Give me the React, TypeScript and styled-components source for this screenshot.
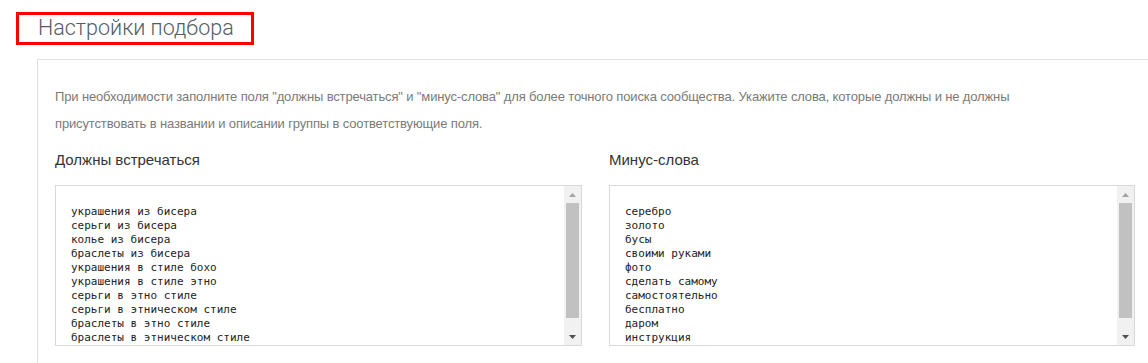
import React from 'react'
import styled, { createGlobalStyle } from 'styled-components'

const GlobalStyle = createGlobalStyle`
  html, body {
    margin: 0;
    padding: 0;
    overflow: hidden;
    background: #fff;
  }
`

const Page = styled.div`
  width: 1148px;
  height: 363px;
  overflow: hidden;
  padding: 12px 0 0 16px;
  box-sizing: border-box;
`

const TitleBox = styled.div`
  display: inline-block;
  box-sizing: border-box;
  width: 238px;
  height: 33px;
  border: 3px solid #f00;
  padding-left: 19px;
  font-family: Roboto, 'Liberation Sans', sans-serif;
  font-weight: 300;
  font-size: 21.5px;
  line-height: 25px;
  color: #555b63;
  white-space: nowrap;
`

const Panel = styled.section`
  box-sizing: border-box;
  width: 1117px;
  margin: 14px 0 0 21px;
  padding: 23px 17px 40px 17px;
  border: 1px solid #e0e0e0;
`

const Hint = styled.p`
  margin: 0;
  font-family: 'Liberation Sans', Arial, sans-serif;
  font-size: 13px;
  line-height: 27px;
  letter-spacing: -0.14px;
  color: #7a7a7a;
`

const Columns = styled.div`
  display: grid;
  grid-template-columns: 527px 526px;
  column-gap: 27px;
  margin-top: 13px;
`

const Field = styled.div`
  display: flex;
  flex-direction: column;
`

const Label = styled.label`
  font-family: 'Liberation Sans', Arial, sans-serif;
  font-size: 15px;
  line-height: 20px;
  color: #333;
  margin-bottom: 15px;
`

const AreaFrame = styled.div`
  box-sizing: border-box;
  display: flex;
  height: 161px;
  border: 1px solid #d9d9d9;
  background: #fff;
`

const WordsArea = styled.textarea`
  flex: 1;
  min-width: 0;
  box-sizing: border-box;
  height: 100%;
  margin: 0;
  padding: 19px 15px 0 15px;
  border: none;
  resize: none;
  outline: none;
  overflow: hidden;
  font-family: 'DejaVu Sans Mono', monospace;
  font-size: 11px;
  line-height: 14px;
  color: #222;
  background: transparent;
`

const ScrollBar = styled.div`
  width: 17px;
  display: flex;
  flex-direction: column;
  background: #f1f1f1;
`

const ScrollButton = styled.div`
  height: 17px;
  display: flex;
  align-items: center;
  justify-content: center;
`

const Track = styled.div`
  flex: 1;
  padding: 0 2px;
`

const Thumb = styled.div`
  height: 115px;
  background: #c1c1c1;
`

const Arrow = ({ down }: { down?: boolean }) => (
  <svg width="7" height="4" viewBox="0 0 7 4">
    {down ? (
      <polygon points="0,0 7,0 3.5,4" fill="#505050" />
    ) : (
      <polygon points="0,4 7,4 3.5,0" fill="#a3a3a3" />
    )}
  </svg>
)

const wanted = [
  'украшения из бисера',
  'серьги из бисера',
  'колье из бисера',
  'браслеты из бисера',
  'украшения в стиле бохо',
  'украшения в стиле этно',
  'серьги в этно стиле',
  'серьги в этническом стиле',
  'браслеты в этно стиле',
  'браслеты в этническом стиле',
  'колье в стиле бохо',
]

const minusWords = [
  'серебро',
  'золото',
  'бусы',
  'своими руками',
  'фото',
  'сделать самому',
  'самостоятельно',
  'бесплатно',
  'даром',
  'инструкция',
  'схема',
]

const WordsBox = ({ id, words }: { id: string; words: string[] }) => (
  <AreaFrame>
    <WordsArea id={id} defaultValue={words.join('\n')} spellCheck={false} />
    <ScrollBar>
      <ScrollButton>
        <Arrow />
      </ScrollButton>
      <Track>
        <Thumb />
      </Track>
      <ScrollButton>
        <Arrow down />
      </ScrollButton>
    </ScrollBar>
  </AreaFrame>
)

const App = () => {
  return (
    <>
      <GlobalStyle />
      <Page>
        <TitleBox>Настройки подбора</TitleBox>
        <Panel>
          <Hint>
            При необходимости заполните поля "должны встречаться" и "минус-слова" для более
            точного поиска сообщества. Укажите слова, которые должны и не должны
            <br />
            присутствовать в названии и описании группы в соответствующие поля.
          </Hint>
          <Columns>
            <Field>
              <Label htmlFor="wanted">Должны встречаться</Label>
              <WordsBox id="wanted" words={wanted} />
            </Field>
            <Field>
              <Label htmlFor="minus">Минус-слова</Label>
              <WordsBox id="minus" words={minusWords} />
            </Field>
          </Columns>
        </Panel>
      </Page>
    </>
  )
}

export default App
